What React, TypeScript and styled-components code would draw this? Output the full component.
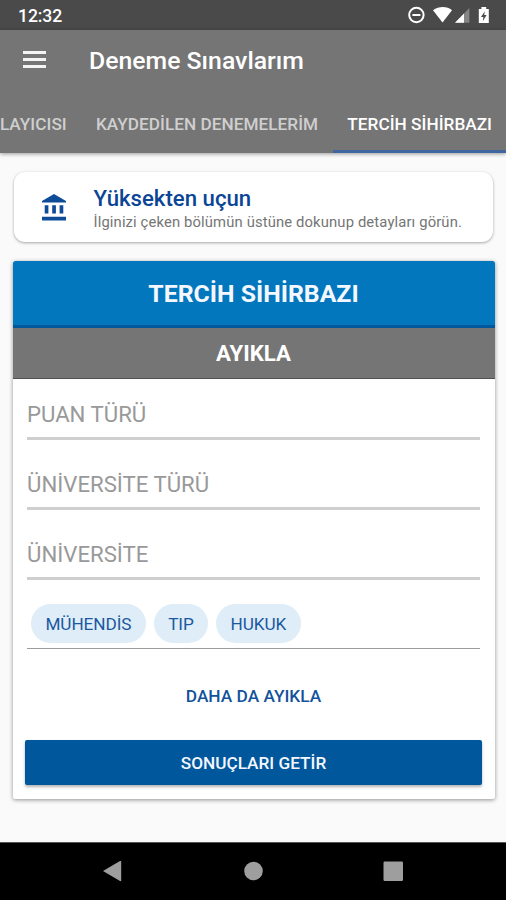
import React from "react";
import styled, { createGlobalStyle } from "styled-components";

const GlobalStyle = createGlobalStyle`
  * { box-sizing: border-box; }
  body { margin: 0; background: #fafafa; font-family: Roboto, "Liberation Sans", sans-serif; }
`;

const Screen = styled.div`
  width: 506px;
  height: 900px;
  display: flex;
  flex-direction: column;
  overflow: hidden;
  background: #fafafa;
`;

const StatusBar = styled.div`
  flex: none;
  height: 30px;
  padding: 2px 15px 0 18px;
  display: flex;
  align-items: center;
  justify-content: space-between;
  background: #4a4a4a;
  color: #fff;
`;

const Clock = styled.span`
  font-size: 17.6px;
  font-weight: 500;
  letter-spacing: -0.1px;
`;

const StatusIcons = styled.svg`
  display: block;
  margin-top: -2px;
`;

const AppBar = styled.header`
  flex: none;
  height: 122.5px;
  display: flex;
  flex-direction: column;
  background: #757575;
  box-shadow: 0 1px 4px rgba(0, 0, 0, 0.4);
`;

const Toolbar = styled.div`
  height: 61px;
  padding-left: 23px;
  display: flex;
  align-items: center;
  gap: 43px;
`;

const MenuButton = styled.button`
  width: 23px;
  height: 17px;
  margin-top: -2px;
  padding: 0;
  border: 0;
  background: none;
  display: flex;
  flex-direction: column;
  justify-content: space-between;
`;

const MenuBar = styled.span`
  height: 3px;
  background: #f4f4f4;
`;

const Title = styled.h1`
  margin: 0;
  color: #fff;
  font-size: 24.8px;
  line-height: 30px;
  font-weight: 500;
  white-space: nowrap;
`;

const Tabs = styled.nav`
  flex: 1;
  display: flex;
  justify-content: flex-end;
  overflow: hidden;
`;

const Tab = styled.div<{ $active?: boolean }>`
  flex: none;
  padding: 7px 14.6px 0;
  display: flex;
  align-items: center;
  color: ${(p) => (p.$active ? "#fff" : "#cfcfcf")};
  font-size: 17.2px;
  letter-spacing: 0.03px;
  font-weight: 500;
  white-space: nowrap;
  border-bottom: 3px solid ${(p) => (p.$active ? "#3f669f" : "transparent")};

  &:last-child {
    padding-right: 14px;
  }
`;

const Content = styled.main`
  flex: 1;
  padding: 19.5px 11.5px 0 12.5px;
`;

const Notice = styled.section`
  height: 70px;
  margin: 0 1.5px 0 1.5px;
  padding-left: 27.5px;
  display: flex;
  align-items: center;
  gap: 28px;
  background: #fff;
  border-radius: 11px;
  box-shadow: 0 1px 3px rgba(0, 0, 0, 0.34);
`;

const NoticeText = styled.div`
  padding-top: 4px;
`;

const NoticeTitle = styled.div`
  color: #0b4596;
  font-size: 22.2px;
  line-height: 26px;
  font-weight: 500;
`;

const NoticeBody = styled.div`
  color: #757575;
  font-size: 14.8px;
  letter-spacing: 0.135px;
  line-height: 23px;
  white-space: nowrap;
`;

const Card = styled.section`
  height: 538px;
  margin-top: 19px;
  display: flex;
  flex-direction: column;
  background: #fff;
  border-radius: 2.5px;
  box-shadow: 0 1px 4px rgba(0, 0, 0, 0.42);
`;

const CardTitle = styled.h2`
  flex: none;
  height: 67px;
  margin: 0;
  display: flex;
  align-items: center;
  justify-content: center;
  background: #0277bd;
  border-bottom: 3.5px solid #01579b;
  border-radius: 2.5px 2.5px 0 0;
  color: #f4f7ff;
  font-size: 24.8px;
  font-weight: 700;
`;

const CardSubtitle = styled.h3`
  flex: none;
  height: 50.5px;
  margin: 0;
  display: flex;
  align-items: center;
  justify-content: center;
  background: #757575;
  border-bottom: 1.5px solid #515151;
  color: #fff;
  font-size: 22.2px;
  font-weight: 700;
`;

const Form = styled.div`
  padding: 0 14.5px;
`;

const Field = styled.div`
  height: 70.2px;
  padding-bottom: 9.5px;
  display: flex;
  align-items: flex-end;
  border-bottom: 3px solid #cfcfcf;
  color: #999;
  font-size: 22.2px;
  line-height: 27px;

  &:first-child {
    height: 61.5px;
  }
`;

const Chips = styled.div`
  height: 69px;
  padding: 0 4px 5.5px;
  display: flex;
  align-items: flex-end;
  gap: 8px;
  border-bottom: 1.6px solid #9b9d98;
`;

const Chip = styled.span`
  height: 39px;
  padding: 1px 14.4px 0;
  display: flex;
  align-items: center;
  border-radius: 20px;
  background: #deedf7;
  color: #1c589f;
  font-size: 17.2px;
  letter-spacing: -0.08px;
`;

const MoreButton = styled.button`
  display: block;
  height: 91px;
  width: 100%;
  padding: 3px 0 0;
  border: 0;
  background: none;
  color: #14539c;
  font: 500 17.3px Roboto, "Liberation Sans", sans-serif;
`;

const SubmitButton = styled.button`
  flex: none;
  height: 45px;
  margin: 0 12.5px;
  padding: 1px 0 0;
  border: 0;
  border-radius: 2px;
  background: #01579b;
  box-shadow: 0 2px 3px rgba(0, 0, 0, 0.3);
  color: #f4f7ff;
  font: 500 17.2px Roboto, "Liberation Sans", sans-serif;
`;

const NavBar = styled.footer`
  flex: none;
  height: 58.5px;
  border-top: 1px solid #555;
  background: #000;
`;

const FILTERS = ["PUAN TÜRÜ", "ÜNİVERSİTE TÜRÜ", "ÜNİVERSİTE"];
const KEYWORDS = ["MÜHENDİS", "TIP", "HUKUK"];

export default function App() {
  return (
    <>
      <GlobalStyle />
      <Screen>
        <StatusBar>
          <Clock>12:32</Clock>
          <StatusIcons width="84" height="20" viewBox="0 0 84 20" fill="#fff">
            <circle cx="9.4" cy="10" r="7.2" fill="none" stroke="#fff" strokeWidth="2" />
            <rect x="5.4" y="9" width="8" height="2" />
            <path d="M26 5.2C32 .8 40 .8 45 5.2L35.5 17.6z" />
            <path d="M48 17.8 62.4 3v14.8z" fill="#858585" />
            <path d="M48 17.8 57 8.6v9.2z" />
            <path d="M71.8 4h2.6V2h4.8v2h2.6v14h-10z" />
            <path d="M77.8 6.2 74 12h2.4l-.6 4.2L79.6 10h-2.4z" fill="#4a4a4a" />
          </StatusIcons>
        </StatusBar>
        <AppBar>
          <Toolbar>
            <MenuButton aria-label="Menü">
              <MenuBar />
              <MenuBar />
              <MenuBar />
            </MenuButton>
            <Title>Deneme Sınavlarım</Title>
          </Toolbar>
          <Tabs>
            <Tab>LAYICISI</Tab>
            <Tab>KAYDEDİLEN DENEMELERİM</Tab>
            <Tab $active>TERCİH SİHİRBAZI</Tab>
          </Tabs>
        </AppBar>
        <Content>
          <Notice>
            <svg width="24" height="27" viewBox="0 0 24 27" fill="#0f4c97">
              <path d="M0 8.6V7L12 0l12 7v1.6z" />
              <path d="M2.7 11.2h3.7v8.3H2.7zM10.2 11.2h3.7v8.3h-3.7zM17.6 11.2h3.7v8.3h-3.7zM0 22.8h24v3.7H0z" />
            </svg>
            <NoticeText>
              <NoticeTitle>Yüksekten uçun</NoticeTitle>
              <NoticeBody>İlginizi çeken bölümün üstüne dokunup detayları görün.</NoticeBody>
            </NoticeText>
          </Notice>
          <Card>
            <CardTitle>TERCİH SİHİRBAZI</CardTitle>
            <CardSubtitle>AYIKLA</CardSubtitle>
            <Form>
              {FILTERS.map((label) => (
                <Field key={label}>{label}</Field>
              ))}
              <Chips>
                {KEYWORDS.map((word) => (
                  <Chip key={word}>{word}</Chip>
                ))}
              </Chips>
              <MoreButton>DAHA DA AYIKLA</MoreButton>
            </Form>
            <SubmitButton>SONUÇLARI GETİR</SubmitButton>
          </Card>
        </Content>
        <NavBar>
          <svg width="506" height="57" viewBox="0 0 506 57" fill="#9e9e9e">
            <path d="M103 28 120 18.1a.8.8 0 0 1 1.2.7v18.6a.8.8 0 0 1-1.2.7z" />
            <circle cx="253.5" cy="28" r="9.3" />
            <rect x="383.5" y="18.5" width="19.5" height="19.5" rx="1.2" />
          </svg>
        </NavBar>
      </Screen>
    </>
  );
}
